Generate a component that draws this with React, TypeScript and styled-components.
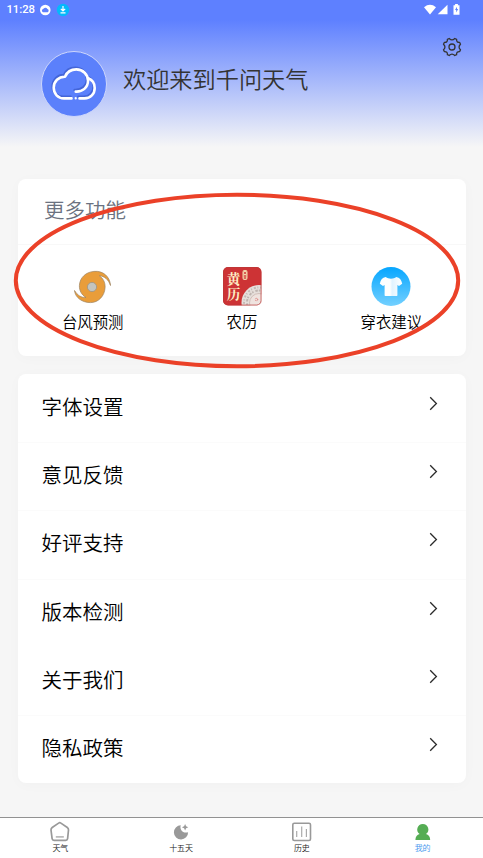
import React from "react";
import styled, { createGlobalStyle } from "styled-components";

const GlobalStyle = createGlobalStyle`
  * { box-sizing: border-box; }
  body {
    margin: 0;
    background: #f6f6f6;
    font-family: "Noto Sans CJK SC", "Noto Sans", sans-serif;
    font-weight: 350;
    color: #000;
  }
  svg { display: block; }
`;

const Screen = styled.div`
  position: relative;
  width: 483px;
  height: 858px;
  overflow: hidden;
  display: flex;
  flex-direction: column;
  background: #f6f6f6;
`;

const Header = styled.header`
  height: 179px;
  flex: none;
  background: linear-gradient(180deg, #5e80ff 0, #5e80ff 20px, #f6f6f6 147px);
`;

const StatusBar = styled.div`
  display: flex;
  align-items: center;
  height: 20px;
  padding: 0 22px 0 6.5px;
  color: #fff;
  font: 500 11.3px/20px Roboto, sans-serif;
`;

const Time = styled.span`
  width: 32.5px;
  letter-spacing: -0.05px;
`;

const StatusRight = styled.div`
  margin-left: auto;
`;

const Profile = styled.div`
  display: flex;
  padding: 31px 21px 0 41px;
`;

const Greeting = styled.h1`
  margin: 10px auto 0 16px;
  font-size: 23.2px;
  line-height: 34px;
  font-weight: 350;
  color: #333;
`;

const SettingsButton = styled.button`
  margin-top: -14px;
  padding: 0;
  width: 20px;
  height: 20px;
  border: 0;
  background: none;
`;

const Card = styled.section`
  flex: none;
  margin: 0 17px 18px 18px;
  background: #fff;
  border-radius: 8px;
  box-shadow: 0 2px 14px rgba(0, 0, 0, 0.025);
`;

const CardTitle = styled.h2`
  margin: 0;
  height: 66px;
  padding-left: 26px;
  border-bottom: 1px solid #f8f8f8;
  font-size: 20.5px;
  line-height: 61px;
  font-weight: 350;
  color: #6b7280;
`;

const FeatureGrid = styled.div`
  display: grid;
  grid-template-columns: repeat(3, 1fr);
  height: 111px;
  padding-top: 21px;
`;

const Feature = styled.div`
  display: flex;
  flex-direction: column;
  align-items: center;
  gap: 5px;
  font-size: 15.4px;
  line-height: 20px;
`;

const MenuRow = styled.div<{ $divided: boolean }>`
  display: flex;
  align-items: flex-start;
  justify-content: space-between;
  height: 68.2px;
  padding: 16px 27px 0 23.5px;
  border-top: 1px solid ${(p) => (p.$divided ? "#fbfbfb" : "transparent")};
  font-size: 20.5px;
  line-height: 30px;
`;

const Chevron = styled.svg`
  margin-top: 5px;
`;

const TabBar = styled.nav`
  display: grid;
  grid-template-columns: repeat(4, 1fr);
  height: 41px;
  margin-top: auto;
  border-top: 1px solid #929292;
  background: #fff;
`;

const Tab = styled.div<{ $active?: boolean }>`
  display: flex;
  flex-direction: column;
  align-items: center;
  padding-top: 3px;
  font-size: 8px;
  line-height: 10px;
  color: ${(p) => (p.$active ? "#3d94ee" : "#222")};
`;

const HighlightRing = styled.svg`
  position: absolute;
  left: 13px;
  top: 192px;
  pointer-events: none;
`;

const StatusIcons = () => (
  <svg width="32" height="14" viewBox="0 0 32 14">
    <circle cx="6.3" cy="7" r="5.3" fill="#fff" />
    <path d="M4 9.2a1.6 1.6 0 0 1 .2-3.1 2.3 2.3 0 0 1 4.2-.2 1.8 1.8 0 0 1 .3 3.3z" fill="#5e80ff" />
    <circle cx="24" cy="7" r="6.2" fill="#04b9fb" />
    <path d="M24 3v4.7M21.8 5.8l2.2 2.2 2.2-2.2M21.5 9.8h5" fill="none" stroke="#fff" strokeWidth="1.2" />
  </svg>
);

const SignalIcons = () => (
  <svg width="37" height="12" viewBox="0 0 37 12">
    <path d="M0 3.3Q6-1.6 12 3.3L6 10.5z" fill="#fff" />
    <path d="M23.5.7V10.3H13.7z" fill="#fff" />
    <path d="M29.5 1.2h1.6V0h2.8v1.2h1.6V10.8h-6z" fill="#fff" />
    <path d="M33 2.7l-2 3.2h1.2v2.7l2-3.5H33z" fill="#5e80ff" />
  </svg>
);

const cloudFront =
  "M30.5 47.4H23C17 47.4 12.7 42.7 12.7 36.8 12.7 30.3 17.6 25.6 24 25.7 26 21 30.3 18.4 35.3 18.4 42 18.4 47 23.5 47 29.8 47 36.5 41.5 41 34.7 40.6";
const cloudBack = "M47.3 27.3C51.5 29 53.7 32.7 53.7 37 53.7 43 49.5 47.4 43.5 47.4H38.5";

const Avatar = () => (
  <svg width="66" height="66" viewBox="0 0 66 66">
    <circle cx="33" cy="33" r="32.5" fill="#5b80fb" stroke="#cdd6fb" />
    <g fill="none" strokeLinecap="round" strokeLinejoin="round" strokeWidth="2.6">
      <path d={cloudFront} transform="translate(-1 -1.6)" stroke="#4465d8" />
      <path d={cloudBack} transform="translate(-1 -1.6)" stroke="#4465d8" />
      <path d={cloudFront} stroke="#fff" />
      <path d={cloudBack} stroke="#fff" />
      <path d="M34.7 47v.4" stroke="#fff" strokeWidth="2.2" />
    </g>
  </svg>
);

const GearIcon = () => (
  <svg width="20" height="20" viewBox="0 0 20 20" fill="none" stroke="#333" strokeWidth="1.3" strokeLinejoin="round">
    <path d="M7.2 1.5Q10 4.4 12.8 1.5L14.6 2.3Q14.3 5.7 17.7 5.4L18.5 7.2Q15.6 10 18.5 12.8L17.7 14.6Q14.3 14.3 14.6 17.7L12.8 18.5Q10 15.6 7.2 18.5L5.4 17.7Q5.7 14.3 2.3 14.6L1.5 12.8Q4.4 10 1.5 7.2L2.3 5.4Q5.7 5.7 5.4 2.3Z" />
    <circle cx="10" cy="10" r="3" />
  </svg>
);

const TyphoonIcon = () => (
  <svg width="40" height="40" viewBox="0 0 40 40">
    <path
      d="M21 5.4C30 4.5 37 10.5 37.5 19.5 35.5 13.5 31.5 10.2 26.3 9.7 30.2 12.3 32.3 16.5 32.1 21.3 31.7 30 25.5 36.6 17.5 36.6 9.5 36.6 2.3 32 1.5 24.5 4.5 29.3 8.2 31.8 13 31.5 8.5 28.8 6.2 24.5 6.4 19.5 6.8 11.5 13 6 21 5.4Z"
      fill="#e99d3a" stroke="#9c8360" strokeWidth=".7"
    />
    <circle cx="19" cy="21" r="4.6" fill="#c4c4bd" stroke="#93908a" strokeWidth=".7" />
  </svg>
);

const AlmanacIcon = () => (
  <svg width="40" height="40" viewBox="0 0 40 40">
    <defs>
      <clipPath id="almanac"><rect x="1" y="1" width="38.5" height="38.5" rx="5" /></clipPath>
    </defs>
    <g clipPath="url(#almanac)">
      <rect width="40" height="40" fill="#cd3335" />
      <circle cx="37" cy="36.5" r="17.5" fill="#e6dfdb" />
      <circle cx="37" cy="36.5" r="15" fill="none" stroke="#c3bab6" strokeWidth="2" strokeDasharray="2 1.5 1 2" />
      <circle cx="37" cy="36.5" r="12" fill="none" stroke="#bfb4b0" strokeWidth="2" strokeDasharray="1.5 2 2.5 1" />
      <circle cx="37" cy="37" r="9.5" fill="#efe3df" stroke="#c7b0aa" strokeWidth=".7" />
      <circle cx="34.5" cy="33.5" r="1.2" fill="none" stroke="#d4605f" strokeDasharray="1 1" />
      <rect x="1.4" y="1.4" width="37.7" height="37.7" rx="4.6" fill="none" stroke="#b93a38" strokeWidth=".8" />
    </g>
    <g fill="#fdeec4" fontFamily="'Noto Serif CJK SC', 'Noto Sans CJK SC', serif" fontWeight="700" fontSize="13.5">
      <text x="4.7" y="17.5">黄</text>
      <text x="4.7" y="33.2">历</text>
    </g>
    <rect x="20.5" y="4" width="5" height="10" rx="2" fill="#f4d9ac" />
    <path d="M21.7 6l2.6 2M24.3 6l-2.6 2M21.5 10h3M23 9v4M21.7 12h2.6" stroke="#cf3033" strokeWidth=".8" />
  </svg>
);

const ClothesIcon = () => (
  <svg width="40" height="40" viewBox="0 0 40 40">
    <defs>
      <linearGradient id="sky" x2="0" y2="1">
        <stop stopColor="#06a6ff" />
        <stop offset="1" stopColor="#73d0ff" />
      </linearGradient>
      <linearGradient id="shirt">
        <stop stopColor="#fff" />
        <stop offset=".45" stopColor="#fff" />
        <stop offset=".55" stopColor="#e1f3ff" />
        <stop offset="1" stopColor="#fff" />
      </linearGradient>
    </defs>
    <circle cx="20" cy="20.5" r="19.5" fill="url(#sky)" />
    <path d="M14.8 11c2.5 2.2 7.9 2.2 10.4 0 3.500.5 5.100 2.800 6 6.800l-3.200 2.300-1.600-1V29.300q0 .7-.7.7h-11.400q-.7 0-.7-.7V19.100l-1.600 1L8.800 17.800c.9-4 2.500-6.300 6-6.800Z" fill="url(#shirt)" />
  </svg>
);

const HomeIcon = () => (
  <svg width="22" height="22" viewBox="0 0 22 22" fill="none" stroke="#999" strokeWidth="1.7">
    <path d="M9.6 2.1Q10.7 1.3 11.9 2.1L18.3 6.5Q19.6 7.5 19.5 9L18.6 17.7Q18.4 19.3 16.7 19.3H5Q3.3 19.3 3.1 17.7L2 9Q1.9 7.5 3.2 6.5Z" />
    <path d="M6.8 15.9h8" strokeWidth="1.4" stroke="#aaa" />
  </svg>
);

const MoonIcon = () => (
  <svg width="22" height="22" viewBox="0 0 22 22" fill="#999">
    <path d="M10.8 4.2C9.3 8.2 12.8 12.8 18.1 11.2A7.1 7.1 0 1 1 10.8 4.200Z" />
    <path d="M15.1 3l1 2.300 2.200 1-2.200 1-1 2.300-1-2.300-2.200-1 2.200-1z" />
  </svg>
);

const ChartIcon = () => (
  <svg width="22" height="22" viewBox="0 0 22 22" fill="none" stroke="#999">
    <rect x="1.8" y="2.2" width="17.7" height="17.3" rx="1.5" strokeWidth="1.6" />
    <path d="M5.7 10v6M10.7 5.5V16M15.4 8v8" strokeWidth="1.2" stroke="#aaa" />
  </svg>
);

const PersonIcon = () => (
  <svg width="22" height="22" viewBox="0 0 22 22" fill="#55ad54">
    <path d="M10.800 2.900a5.500 5.500 0 0 1 3.200 10c2.500.7 4.200 2.600 4.200 6.200H3.400c0-3.600 1.700-5.500 4.200-6.200A5.500 5.500 0 0 1 10.800 2.900Z" />
  </svg>
);

const features = [
  { label: "台风预测", Icon: TyphoonIcon },
  { label: "农历", Icon: AlmanacIcon },
  { label: "穿衣建议", Icon: ClothesIcon },
];

const menu = [
  { label: "字体设置", divided: false },
  { label: "意见反馈", divided: true },
  { label: "好评支持", divided: true },
  { label: "版本检测", divided: true },
  { label: "关于我们", divided: false },
  { label: "隐私政策", divided: true },
];

const tabs = [
  { label: "天气", Icon: HomeIcon },
  { label: "十五天", Icon: MoonIcon },
  { label: "历史", Icon: ChartIcon },
  { label: "我的", Icon: PersonIcon, active: true },
];

export default function App() {
  return (
    <Screen>
      <GlobalStyle />
      <Header>
        <StatusBar>
          <Time>11:28</Time>
          <StatusIcons />
          <StatusRight><SignalIcons /></StatusRight>
        </StatusBar>
        <Profile>
          <Avatar />
          <Greeting>欢迎来到千问天气</Greeting>
          <SettingsButton aria-label="设置"><GearIcon /></SettingsButton>
        </Profile>
      </Header>
      <Card>
        <CardTitle>更多功能</CardTitle>
        <FeatureGrid>
          {features.map(({ label, Icon }) => (
            <Feature key={label}>
              <Icon />
              <span>{label}</span>
            </Feature>
          ))}
        </FeatureGrid>
      </Card>
      <Card>
        {menu.map(({ label, divided }) => (
          <MenuRow key={label} $divided={divided}>
            <span>{label}</span>
            <Chevron width="10" height="16" viewBox="0 0 10 16" fill="none" stroke="#2b2b2b" strokeWidth="1.3">
              <path d="M1.2 1.2L7.4 7.5l-6.2 6.3" />
            </Chevron>
          </MenuRow>
        ))}
      </Card>
      <TabBar>
        {tabs.map(({ label, Icon, active }) => (
          <Tab key={label} $active={active}>
            <Icon />
            <span>{label}</span>
          </Tab>
        ))}
      </TabBar>
      <HighlightRing width="449" height="178" viewBox="0 0 449 178">
        <ellipse cx="224" cy="88.5" rx="221.2" ry="85.7" fill="none" stroke="#eb4128" strokeWidth="4" />
      </HighlightRing>
    </Screen>
  );
}
